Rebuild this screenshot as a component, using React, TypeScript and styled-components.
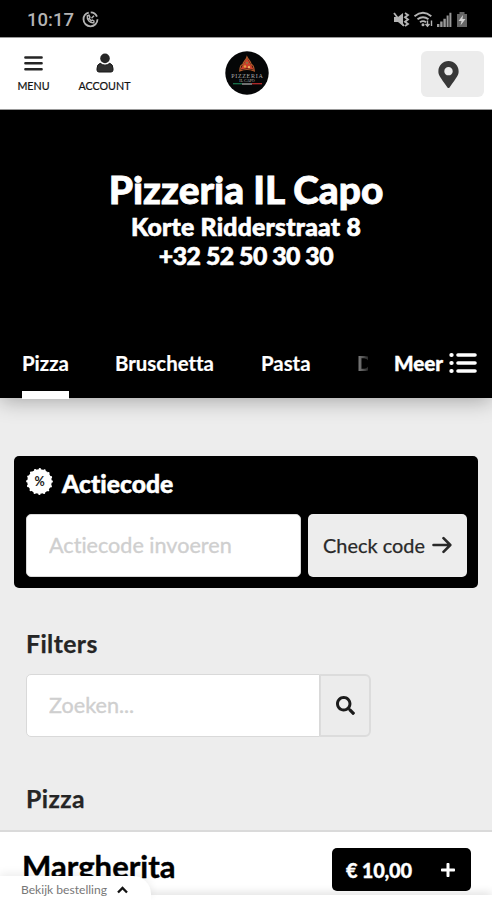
import React from "react";
import styled, { createGlobalStyle } from "styled-components";
import { FaSearch, FaPlus, FaMapMarkerAlt } from "react-icons/fa";

const GlobalStyle = createGlobalStyle`
  * { box-sizing: border-box; }
  html, body { margin: 0; padding: 0; }
  body { width: 492px; height: 900px; overflow: hidden; background: #ededed; font-family: Lato, "Open Sans", sans-serif; font-variant-ligatures: none; }
  button, input { font-family: inherit; font-variant-ligatures: none; margin: 0; }
`;

const Screen = styled.div`
  position: relative;
  width: 492px;
  height: 900px;
  overflow: hidden;
  display: flex;
  flex-direction: column;
  background: #ededed;
  color: #222;
`;

const StatusBar = styled.div`
  flex: none;
  height: 37px;
  background: #000;
  color: #b4b4b4;
  display: flex;
  align-items: center;
  justify-content: space-between;
  padding: 2px 25px 0 27px;
  font: 500 18.5px/24px Roboto, sans-serif;
`;

const StatusGroup = styled.div<{ $gap: number }>`
  display: flex;
  align-items: center;
  gap: ${(p) => p.$gap}px;
`;

const Header = styled.header`
  flex: none;
  height: 73px;
  background: #fff;
  border-top: 1px solid #999;
  border-bottom: 1px solid #999;
  display: grid;
  grid-template-columns: 225px 44px 1fr;
  align-items: start;
`;

const NavGroup = styled.nav`
  display: flex;
  padding-left: 16px;
  gap: 27px;
`;

const NavButton = styled.button<{ $width: number }>`
  width: ${(p) => p.$width}px;
  border: 0;
  padding: 15px 0 0;
  background: none;
  display: flex;
  flex-direction: column;
  align-items: center;
  gap: 6px;
  color: #111;
  font-size: 10.7px;
  line-height: 14px;
  white-space: nowrap;
  -webkit-text-stroke: 0.2px currentColor;
  svg { height: 20px; display: block; }
`;

const LogoBox = styled.div`
  padding-top: 13px;
  svg { display: block; }
`;

const LocationButton = styled.button`
  justify-self: end;
  margin: 13px 8px 0 0;
  width: 63px;
  height: 46px;
  border: 0;
  border-radius: 6px;
  background: #ececec;
  color: #383838;
  display: flex;
  align-items: center;
  justify-content: center;
  padding: 0 8px 0 0;
`;

const Hero = styled.section`
  flex: none;
  height: 220px;
  background: #000;
  color: #fff;
  text-align: center;
  padding: 56px 0 0;
`;

const HeroTitle = styled.h1`
  margin: 0;
  font-size: 38.8px;
  font-weight: 900;
  line-height: 46px;
  -webkit-text-stroke: 0.8px currentColor;
`;

const HeroLine = styled.div<{ $tracking: number }>`
  font-size: 24.8px;
  font-weight: 900;
  line-height: 29px;
  letter-spacing: ${(p) => p.$tracking}px;
  -webkit-text-stroke: 0.6px currentColor;
`;

const Tabs = styled.div`
  position: relative;
  flex: none;
  height: 68px;
  background: #000;
  color: #fff;
  display: flex;
  padding-left: 22px;
  font-size: 20.4px;
  font-weight: 700;
  -webkit-text-stroke: 0.2px currentColor;
  box-shadow: 0 3px 20px rgba(0, 0, 0, 0.3);
`;

const Tab = styled.div<{ $active?: boolean; $width: number; $gap: number }>`
  height: 69px;
  flex: none;
  width: ${(p) => p.$width}px;
  margin-right: ${(p) => p.$gap}px;
  padding-top: 21px;
  line-height: 24px;
  white-space: nowrap;
  border-bottom: 8px solid ${(p) => (p.$active ? "#fff" : "transparent")};
`;

const FadedTab = styled(Tab)`
  overflow: hidden;
  color: transparent;
  background: linear-gradient(90deg, #888, #2a2a2a);
  background-clip: text;
`;

const MoreButton = styled.div`
  display: flex;
  gap: 6px;
  height: 24px;
  margin-top: 21px;
  line-height: 24px;
  font-size: 20.6px;
  font-weight: 900;
  -webkit-text-stroke: 0.4px currentColor;
  svg { margin-top: 1px; }
`;

const Promo = styled.section`
  flex: none;
  margin: 58px 14px 0;
  height: 132px;
  border-radius: 5px;
  background: #000;
  padding: 11px 11px 11px 12px;
`;

const PromoTitle = styled.h2`
  margin: 0;
  height: 47px;
  display: flex;
  align-items: flex-start;
  gap: 9px;
  color: #fff;
  font-size: 24.7px;
  font-weight: 900;
  line-height: 34px;
  -webkit-text-stroke: 0.5px currentColor;
`;

const PromoForm = styled.div`
  display: grid;
  grid-template-columns: 275px 159px;
  justify-content: space-between;
  height: 63px;
`;

const Field = styled.input`
  min-width: 0;
  height: 63px;
  border: 1px solid #d9d9d9;
  border-radius: 5px;
  background: #fff;
  padding: 0 22px 1px;
  font-size: 21.6px;
  outline: none;
  &::placeholder { color: #cfcfcf; opacity: 1; -webkit-text-stroke: 0.35px #cfcfcf; }
`;

const CheckButton = styled.button`
  border: 0;
  border-radius: 5px;
  background: #ededed;
  color: #292929;
  font-size: 19.9px;
  display: flex;
  align-items: center;
  justify-content: center;
  gap: 7px;
  padding: 0 0 1px;
  white-space: nowrap;
  -webkit-text-stroke: 0.25px currentColor;
`;

const SectionTitle = styled.h3<{ $top: number }>`
  flex: none;
  margin: ${(p) => p.$top}px 0 0 26px;
  font-size: 24.8px;
  line-height: 30px;
  font-weight: 700;
  letter-spacing: 0.4px;
  color: #252525;
  -webkit-text-stroke: 0.25px currentColor;
`;

const SearchRow = styled.div`
  flex: none;
  margin: 15px 0 0 26px;
  width: 345px;
  height: 63px;
  display: flex;
`;

const SearchField = styled(Field)`
  flex: 1;
  border-radius: 5px 0 0 5px;
`;

const SearchButton = styled.button`
  width: 51px;
  border: 2px solid #dcdcdc;
  border-left-width: 1px;
  border-radius: 0 6px 6px 0;
  background: #ececec;
  color: #1b1b1b;
  display: flex;
  align-items: center;
  justify-content: center;
  padding: 0;
`;

const Product = styled.article`
  flex: none;
  margin-top: 16px;
  height: 70px;
  border-top: 2px solid #dadada;
  background: #fff;
  display: flex;
  justify-content: space-between;
  padding: 16px 21px 0 22px;
`;

const ProductName = styled.div`
  color: #000;
  font-size: 31.1px;
  font-weight: 700;
  line-height: 36px;
  -webkit-text-stroke: 0.4px currentColor;
`;

const PriceButton = styled.button`
  width: 139px;
  height: 43px;
  border: 0;
  border-radius: 5px;
  background: #000;
  color: #fff;
  display: flex;
  align-items: center;
  justify-content: space-between;
  padding: 0 15px 0 14px;
  font-size: 20px;
  font-weight: 900;
  letter-spacing: -0.25px;
  -webkit-text-stroke: 0.3px currentColor;
`;

const OrderDock = styled.div`
  position: absolute;
  left: 0;
  right: 0;
  bottom: 0;
  height: 5px;
  background: #fff;
  box-shadow: 0 -1px 10px rgba(0, 0, 0, 0.2);
`;

const OrderTab = styled.div`
  position: absolute;
  left: 0;
  bottom: 0;
  width: 151px;
  height: 24px;
  border-radius: 0 18px 0 0;
  background: #fff;
  color: #777;
  display: flex;
  align-items: center;
  gap: 10px;
  padding: 3px 0 0 21px;
  font-size: 12.1px;
  line-height: 16px;
  box-shadow: 0 -3px 8px rgba(0, 0, 0, 0.07);
`;

const MenuIcon = () => (
  <svg width="19" height="20" viewBox="0 0 19 20" stroke="#252525" strokeWidth="2.5" strokeLinecap="round">
    <path d="M1.4 4.5H17.6M1.4 10.3H17.6M1.4 16.2H17.6" />
  </svg>
);

const ListIcon = () => (
  <svg width="28" height="22" viewBox="0 0 28 22" fill="none" stroke="#fff" strokeLinecap="round">
    <path d="M9 3H26M9 11H26M9 19H26" strokeWidth="3.6" />
    <path d="M2.4 3H2.6M2.4 11H2.6M2.4 19H2.6" strokeWidth="4.2" />
  </svg>
);

const PersonIcon = () => (
  <svg width="18" height="20" viewBox="0 0 18 20">
    <circle cx="9" cy="5.4" r="4.8" fill="#262626" />
    <path d="M4.2 10.3Q9 14 13.8 10.3Q17 11.4 17 15.5V17Q17 19 15 19H3Q1 19 1 17V15.5Q1 11.4 4.2 10.3Z" fill="#303030" stroke="#171717" />
  </svg>
);

const MessageIcon = () => (
  <svg width="17" height="17" viewBox="0 0 17 17" fill="none" stroke="#b4b4b4">
    <circle cx="8.5" cy="8.3" r="7" strokeWidth="1.8" strokeDasharray="31 2 8 3" />
    <path d="M5.3 4.8C4.6 8.8 8 12.3 11.8 11.7L12 10L10.4 9L9.2 9.8L7.1 7.4L8 6.2L7 4.2Z" strokeWidth="1.4" />
    <path d="M9.5 7.2L12 4.8" strokeWidth="1.4" />
  </svg>
);

const StatusIcons = () => (
  <svg width="74" height="18" viewBox="0 0 74 18" fill="#b4b4b4">
    <path d="M1 6H5L10 2V15L5 11H1Z" />
    <path d="M1 2L11 15" stroke="#b4b4b4" strokeWidth="1.8" />
    <path d="M12 2L15 4L12 6.2L15 8.5L12 10.7L15 13L12 15" fill="none" stroke="#b4b4b4" strokeWidth="1.8" />
    <g fill="none" stroke="#b4b4b4" strokeWidth="1.9">
      <path d="M21.5 5.2Q30 -1.7 38.3 5.2M24.5 8.2Q30 4.2 35.5 8.2M27 11.2Q30 9 33 11.2" />
      <path d="M34.5 9.5V15M32.5 13L34.5 15.2L36.5 13M38.5 15V9.5" strokeWidth="1.4" />
    </g>
    <circle cx="30" cy="13.7" r="1.5" />
    <path d="M44 13H46.4V16H44ZM47.2 10.5H49.6V16H47.2ZM50.4 7.7H52.8V16H50.4ZM53.6 4.5H55.6V16H53.6ZM56.4 1.8H58.4V16H56.4Z" opacity=".85" />
    <path d="M64 3H66.5V1H71.5V3H74V16H64Z" fill="#666" />
    <path d="M70 4L65.5 10H68.5L67.5 14.5L72.5 8H69.5Z" fill="#d2d2d2" />
  </svg>
);

const Logo = () => (
  <svg width="44" height="44" viewBox="0 0 44 44">
    <circle cx="22" cy="22" r="21.7" fill="#050607" />
    <path d="M22 7L15 19Q22 16 29 19Z" fill="#cc412c" />
    <path d="M22 6C24 10 25 9 26.5 14C28 13 29 17 29.3 20Q22 17 14.8 20C15 16 16 13 18 14C18 10 21 10 22 6Z" fill="none" stroke="#b45a2b" strokeWidth="1.2" />
    <circle cx="20" cy="15.5" r="1.2" fill="#e4a13d" />
    <circle cx="24" cy="16.2" r="1.1" fill="#f1c06a" />
    <circle cx="22" cy="11.8" r=".9" fill="#70914e" />
    <text x="22.3" y="27" textAnchor="middle" fontFamily="Liberation Serif, serif" fontSize="6" letterSpacing=".7" fill="#a9a9a9">PIZZERIA</text>
    <text x="22" y="31.2" textAnchor="middle" fontFamily="Liberation Serif, serif" fontSize="4" fill="#bbb">IL CAPO</text>
    <path d="M8 32.7H17" stroke="#19734c" strokeWidth="1.3" />
    <path d="M17 33H27" stroke="#aaa" strokeWidth="1.3" />
    <path d="M27 32.7H37" stroke="#b72c2c" strokeWidth="1.3" />
  </svg>
);

const PercentBadge = () => (
  <svg width="27" height="28" viewBox="0 0 27 28">
    <circle cx="13.5" cy="14.5" r="12.2" fill="#fff" />
    <circle cx="13.5" cy="14.5" r="12.2" fill="none" stroke="#fff" strokeWidth="2.4" strokeDasharray="0 4.79" strokeLinecap="round" />
    <text x="13.6" y="18.8" textAnchor="middle" fontFamily="Lato, sans-serif" fontWeight="700" fontSize="12.5" fill="#222" stroke="none">%</text>
  </svg>
);

const ArrowIcon = () => (
  <svg width="20" height="18" viewBox="0 0 20 18" fill="none" stroke="#292929" strokeWidth="2.6" strokeLinecap="round" strokeLinejoin="round">
    <path d="M1.5 9H18M11.5 2.2L18.3 9L11.5 15.8" />
  </svg>
);

const ChevronUp = () => (
  <svg width="11" height="8" viewBox="0 0 11 8" fill="none" stroke="#111" strokeWidth="2.3">
    <path d="M1 6.5L5.5 2L10 6.5" />
  </svg>
);

export default function App() {
  return (
    <Screen>
      <GlobalStyle />
      <StatusBar>
        <StatusGroup $gap={8}>10:17 <MessageIcon /></StatusGroup>
        <StatusIcons />
      </StatusBar>
      <Header>
        <NavGroup>
          <NavButton $width={35}><MenuIcon />MENU</NavButton>
          <NavButton $width={53}><PersonIcon />ACCOUNT</NavButton>
        </NavGroup>
        <LogoBox><Logo /></LogoBox>
        <LocationButton aria-label="Locatie"><FaMapMarkerAlt size={27} /></LocationButton>
      </Header>
      <Hero>
        <HeroTitle>Pizzeria IL Capo</HeroTitle>
        <HeroLine $tracking={0.2}>Korte Ridderstraat 8</HeroLine>
        <HeroLine $tracking={-0.5}>+32 52 50 30 30</HeroLine>
      </Hero>
      <Tabs>
        <Tab $active $width={47} $gap={46}>Pizza</Tab>
        <Tab $width={98} $gap={48}>Bruschetta</Tab>
        <Tab $width={48} $gap={48}>Pasta</Tab>
        <FadedTab $width={11} $gap={26}>D</FadedTab>
        <MoreButton>Meer <ListIcon /></MoreButton>
      </Tabs>
      <Promo>
        <PromoTitle><PercentBadge />Actiecode</PromoTitle>
        <PromoForm>
          <Field placeholder="Actiecode invoeren" />
          <CheckButton>Check code <ArrowIcon /></CheckButton>
        </PromoForm>
      </Promo>
      <SectionTitle $top={41}>Filters</SectionTitle>
      <SearchRow>
        <SearchField placeholder="Zoeken..." />
        <SearchButton aria-label="Zoeken"><FaSearch size={19} /></SearchButton>
      </SearchRow>
      <SectionTitle $top={47}>Pizza</SectionTitle>
      <Product>
        <ProductName>Margherita</ProductName>
        <PriceButton>€ 10,00 <FaPlus size={16} /></PriceButton>
      </Product>
      <OrderDock />
      <OrderTab>Bekijk bestelling <ChevronUp /></OrderTab>
    </Screen>
  );
}
